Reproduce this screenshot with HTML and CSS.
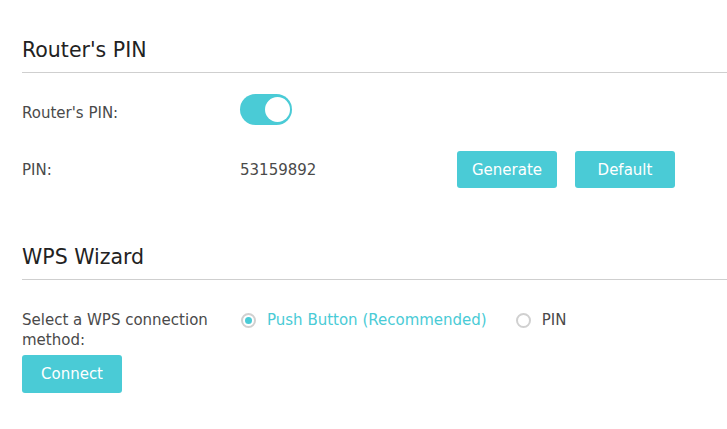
FILE: index.html
```html
<!DOCTYPE html>
<html>
<head>
<meta charset="utf-8">
<link rel="stylesheet" href="styles.css">
</head>
<body>
<div class="page">
  <section class="section">
    <h2 class="title">Router's PIN</h2>
    <div class="row row-toggle">
      <div class="label">Router's PIN:</div>
      <div class="control">
        <span class="toggle"><span class="knob"></span></span>
      </div>
    </div>
    <div class="row row-pin">
      <div class="label">PIN:</div>
      <div class="control">
        <span class="value">53159892</span>
        <div class="btns">
          <button class="btn">Generate</button>
          <button class="btn">Default</button>
        </div>
      </div>
    </div>
  </section>
  <section class="section wps">
    <h2 class="title">WPS Wizard</h2>
    <div class="row row-method">
      <div class="label">Select a WPS connection method:</div>
      <div class="control radios">
        <label class="radio checked"><span class="dot"></span>Push Button (Recommended)</label>
        <label class="radio"><span class="dot"></span>PIN</label>
      </div>
    </div>
    <button class="btn connect">Connect</button>
  </section>
</div>
</body>
</html>
```
FILE: styles.css
```css
html, body { margin: 0; padding: 0; background: #fff; }
body { font-family: "DejaVu Sans", Verdana, sans-serif; color: #4a4a4a; font-size: 15px; }
.page { padding: 36px 0 0 22px; }
.title { margin: 0; font-weight: normal; font-size: 20.5px; color: #222; line-height: 28px; padding-bottom: 8px; border-bottom: 1px solid #cfcfcf; }
.row { display: flex; align-items: center; }
.label { width: 218px; }
.control { display: flex; align-items: center; flex: 1; }
.row-toggle { margin-top: 21px; height: 31px; align-items: flex-start; }
.row-toggle .label { line-height: 20px; padding-top: 9px; }
.toggle { width: 52px; height: 31px; border-radius: 16px; background: #4acbd6; position: relative; display: inline-block; }
.knob { position: absolute; right: 2px; top: 3px; width: 25px; height: 25px; border-radius: 50%; background: #fff; }
.row-pin { margin-top: 26px; height: 37px; }
.value { width: 217px; }
.btns { display: flex; gap: 18px; }
.btn { font-family: inherit; font-size: 15px; color: #fff; background: #4acbd6; border: none; border-radius: 3px; width: 100px; height: 37px; padding: 0; }
.wps { margin-top: 55px; }
.row-method { align-items: flex-start; margin-top: 30px; }
.row-method .label { width: 200px; line-height: 20px; margin-right: 18px; }
.radios { gap: 28px; line-height: 20px; }
.radio { display: flex; align-items: center; gap: 11px; }
.radio.checked { color: #4acbd6; }
.dot { width: 11px; height: 11px; border: 2px solid #d0d0d0; border-radius: 50%; position: relative; box-sizing: content-box; margin-left: 1px; }
.radio.checked .dot::after { content: ""; position: absolute; left: 2px; top: 2px; width: 7px; height: 7px; border-radius: 50%; background: #4acbd6; }
.connect { margin-top: 5px; width: 100px; height: 38px; }
```
